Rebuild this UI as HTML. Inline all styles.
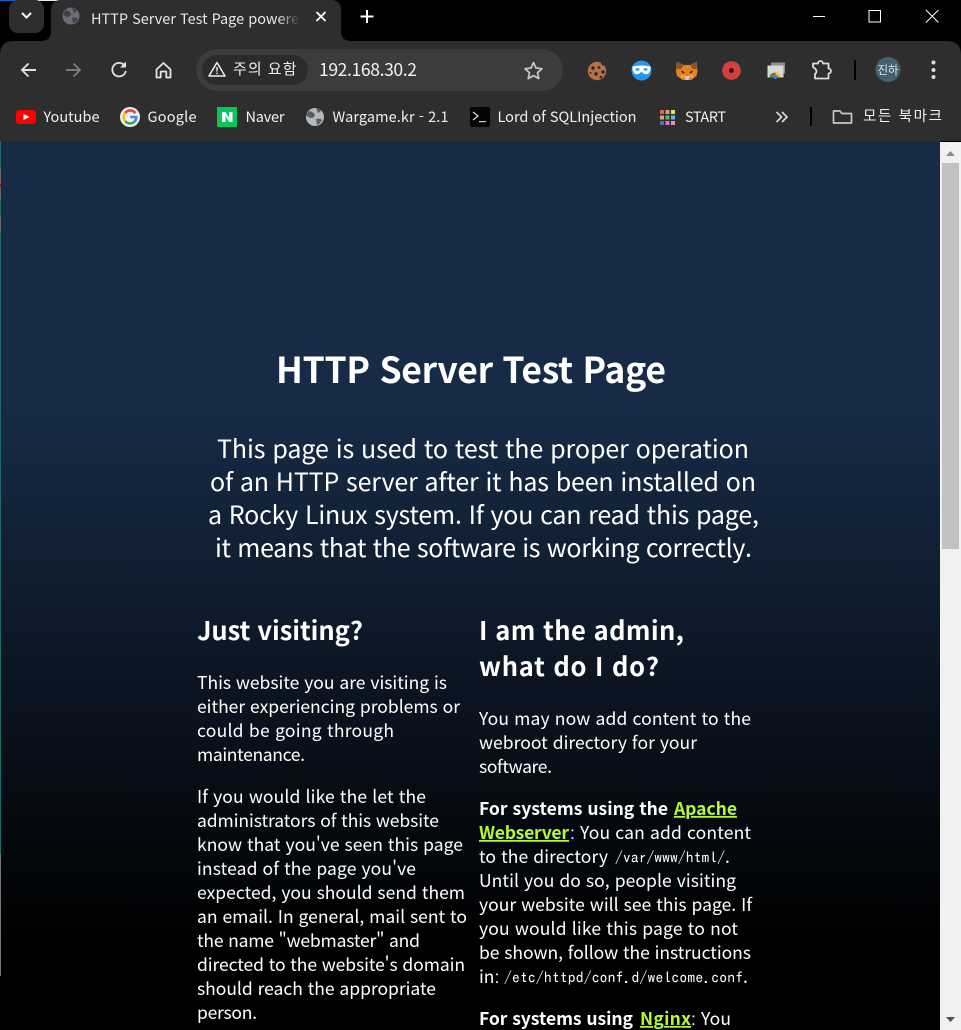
<!DOCTYPE html>
<html lang="ko"><head><meta charset="utf-8"><title>HTTP Server Test Page</title>
<style>
html,body{margin:0;padding:0;background:#000;width:961px;height:1030px;overflow:hidden}
svg{display:block;position:absolute;left:0;top:0}
text{font-family:"Noto Sans CJK KR","Liberation Sans",sans-serif;fill:#fff}
tspan.c{font-family:"Liberation Sans",sans-serif}
.ui{font-size:14.5px;fill:#f0f0f0}
.b{font-size:17.5px}
.bb{font-size:17.5px;font-weight:700}
.m{font-family:"IPAGothic","Liberation Mono",monospace;font-size:15.6px}
.l{fill:#b4f836;font-size:17.5px;font-weight:700;text-decoration:underline}
.h2{font-size:25.5px;font-weight:700}
.lead{font-size:25px}
</style></head><body>
<svg width="961" height="1030" viewBox="0 0 961 1030" xmlns="http://www.w3.org/2000/svg">
<defs>
<linearGradient id="g" x1="0" y1="141" x2="0" y2="1030" gradientUnits="userSpaceOnUse">
<stop offset="0.3" stop-color="#172b46"/><stop offset="0.9" stop-color="#000"/>
</linearGradient>
<linearGradient id="f" x1="0" x2="1"><stop offset="0" stop-color="#2e2e2e" stop-opacity="0"/><stop offset="1" stop-color="#2e2e2e"/></linearGradient>
</defs>

<!-- page -->
<rect x="0" y="141" width="941" height="889" fill="url(#g)"/>
<rect x="0" y="141" width="1" height="270" fill="#1f6a68"/>
<rect x="0" y="411" width="1" height="155" fill="#1f6a68"/>
<rect x="0" y="168" width="1" height="32" fill="#666"/>
<rect x="0" y="184" width="1" height="3" fill="#8a2020"/>
<rect x="0" y="216" width="1" height="16" fill="#666"/>
<rect x="0" y="566" width="1" height="408" fill="#1f6a68"/>
<rect x="0" y="854" width="1" height="122" fill="#777"/>

<!-- scrollbar -->
<rect x="940" y="142" width="21" height="888" fill="#f1f1f1"/>
<rect x="942" y="163" width="17" height="386" fill="#c1c1c1"/>
<path d="M946 156 L955 156 L950.5 151 Z" fill="#8c8c8c"/>
<path d="M946 1017 L955 1017 L950.5 1022 Z" fill="#505050"/>

<!-- headings -->
<text x="276" y="383" font-size="35.5" font-weight="700" textLength="390" lengthAdjust="spacing">HTTP Server Test Page</text>
<text class="lead" x="217" y="458" textLength="532" lengthAdjust="spacing">This page is used to test the proper operation</text>
<text class="lead" x="210" y="491" textLength="546" lengthAdjust="spacing">of an HTTP server after it has been installed on</text>
<text class="lead" x="208" y="524" textLength="551" lengthAdjust="spacing">a Rocky Linux system. If you can read this page,</text>
<text class="lead" x="215" y="557" textLength="537" lengthAdjust="spacing">it means that the software is working correctly.</text>

<text class="h2" x="197" y="640" textLength="166" lengthAdjust="spacing">Just visiting?</text>
<text class="h2" x="479" y="640" textLength="205" lengthAdjust="spacing">I am the admin,</text>
<text class="h2" x="479" y="676" textLength="180" lengthAdjust="spacing">what do I do?</text>

<!-- left column -->
<text class="b" x="197" y="689" textLength="250" lengthAdjust="spacing">This website you are visiting is</text>
<text class="b" x="197" y="713" textLength="263" lengthAdjust="spacing">either experiencing problems or</text>
<text class="b" x="197" y="737" textLength="197" lengthAdjust="spacing">could be going through</text>
<text class="b" x="197" y="761" textLength="108" lengthAdjust="spacing">maintenance.</text>
<text class="b" x="197" y="803" textLength="229" lengthAdjust="spacing">If you would like the let the</text>
<text class="b" x="197" y="827" textLength="242" lengthAdjust="spacing">administrators of this website</text>
<text class="b" x="197" y="851" textLength="266" lengthAdjust="spacing">know that you've seen this page</text>
<text class="b" x="197" y="875" textLength="219" lengthAdjust="spacing">instead of the page you've</text>
<text class="b" x="197" y="899" textLength="268" lengthAdjust="spacing">expected, you should send them</text>
<text class="b" x="197" y="923" textLength="270" lengthAdjust="spacing">an email. In general, mail sent to</text>
<text class="b" x="197" y="947" textLength="223" lengthAdjust="spacing">the name "webmaster" and</text>
<text class="b" x="197" y="971" textLength="268" lengthAdjust="spacing">directed to the website's domain</text>
<text class="b" x="197" y="995" textLength="239" lengthAdjust="spacing">should reach the appropriate</text>
<text class="b" x="197" y="1019" textLength="60" lengthAdjust="spacing">person.</text>

<!-- right column -->
<text class="b" x="479" y="725" textLength="272" lengthAdjust="spacing">You may now add content to the</text>
<text class="b" x="479" y="749" textLength="218" lengthAdjust="spacing">webroot directory for your</text>
<text class="b" x="479" y="773" textLength="73" lengthAdjust="spacing">software.</text>
<text class="bb" x="479" y="815" textLength="189" lengthAdjust="spacing">For systems using the</text>
<text class="l" x="674" y="815" textLength="63" lengthAdjust="spacing">Apache</text>
<text class="l" x="479" y="839" textLength="90" lengthAdjust="spacing">Webserver</text>
<text class="b" x="570" y="839" textLength="181" lengthAdjust="spacing"><tspan class="c">:</tspan> You can add content</text>
<text class="b" x="479" y="863" textLength="129" lengthAdjust="spacing">to the directory</text>
<text class="m" x="615" y="863" textLength="110" lengthAdjust="spacing">/var/www/html/</text>
<text class="b" x="725" y="863">.</text>
<text class="b" x="479" y="887" textLength="257" lengthAdjust="spacing">Until you do so, people visiting</text>
<text class="b" x="479" y="911" textLength="273" lengthAdjust="spacing">your website will see this page. If</text>
<text class="b" x="479" y="935" textLength="259" lengthAdjust="spacing">you would like this page to not</text>
<text class="b" x="479" y="959" textLength="272" lengthAdjust="spacing">be shown, follow the instructions</text>
<text class="b" x="479" y="983">in<tspan class="c">:</tspan></text>
<text class="m" x="504" y="983" textLength="239" lengthAdjust="spacing">/etc/httpd/conf.d/welcome.conf</text>
<text class="b" x="743" y="983">.</text>
<text class="bb" x="479" y="1025" textLength="154" lengthAdjust="spacing">For systems using</text>
<text class="l" x="640" y="1025" textLength="51" lengthAdjust="spacing">Nginx</text>
<text class="b" x="691" y="1025" textLength="40" lengthAdjust="spacing"><tspan class="c">:</tspan> You</text>

<!-- browser chrome -->
<rect x="0" y="0" width="961" height="41" fill="#000"/>
<rect x="0" y="0" width="30" height="1" fill="#0a66c8"/>
<rect x="30" y="0" width="120" height="1" fill="#e8e8e8"/>
<path d="M0 141 V55 Q0 41 14 41 H947 Q961 41 961 55 V141 Z" fill="#2e2e2e"/>
<rect x="9" y="0" width="35" height="33" rx="9" fill="#2e2e2e"/>
<path d="M22 13 L26.5 17.5 L31 13" fill="none" stroke="#fff" stroke-width="2"/>
<!-- tab -->
<path d="M41 41 Q51 41 51 31 V10 Q51 0 61 0 H331 Q341 0 341 10 V31 Q341 41 351 41 Z" fill="#2e2e2e"/>
<circle cx="71" cy="16" r="8.5" fill="#6a6e73"/>
<path d="M66 10 q4 1 5 4 q-1 3 -4 3 q-3 -1 -4 -3 Z M72 18 q4 -1 6 1 q-2 4 -5 4 Z M72 8 q3 0 5 3 l-3 2 Z" fill="#3f4245"/>
<text x="91" y="24" font-size="14.5" textLength="208" lengthAdjust="spacing" style="fill:#e6e6e6">HTTP Server Test Page powere</text>
<rect x="278" y="5" width="22" height="25" fill="url(#f)"/>
<path d="M316.5 12 L325.5 21 M325.5 12 L316.5 21" stroke="#fff" stroke-width="1.8"/>
<path d="M367 10 V23 M360.5 16.5 H373.5" stroke="#fff" stroke-width="2"/>
<!-- window controls -->
<rect x="813" y="16" width="12" height="1" fill="#fff"/>
<rect x="869" y="10.5" width="11.5" height="11.5" fill="none" stroke="#fff" stroke-width="1"/>
<path d="M926 10 L938.5 22.5 M938.5 10 L926 22.5" stroke="#fff" stroke-width="1"/>

<!-- nav icons -->
<path d="M36 70 H22 M28.5 63.5 L22 70 L28.5 76.5" fill="none" stroke="#e3e3e3" stroke-width="1.9"/>
<path d="M66 70 H80 M73.5 63.5 L80 70 L73.5 76.5" fill="none" stroke="#7a7a7a" stroke-width="1.9"/>
<path d="M124.5 65.5 A6.8 6.8 0 1 0 125.8 71" fill="none" stroke="#e3e3e3" stroke-width="1.8"/>
<path d="M126 61.5 V67.5 H120 Z" fill="#e3e3e3"/>
<path d="M156.5 69.5 L163.5 63 L170.5 69.5 V77.5 H166.3 V71.5 H160.7 V77.5 H156.5 Z" fill="none" stroke="#e3e3e3" stroke-width="1.8" stroke-linejoin="round"/>

<!-- omnibox -->
<rect x="196" y="49" width="367" height="42" rx="21" fill="#3c3c3c"/>
<rect x="202" y="55" width="106" height="30" rx="15" fill="#2b2b2b"/>
<path d="M217 62.5 L225 76 H209 Z" fill="none" stroke="#f0f0f0" stroke-width="1.5" stroke-linejoin="round"/>
<path d="M217 67 V71.5 M217 72.6 V74.2" stroke="#f0f0f0" stroke-width="1.4"/>
<text x="233" y="74" font-size="15" textLength="63.5" lengthAdjust="spacing" style="fill:#f0f0f0">주의 요함</text>
<text x="319" y="76" font-size="17.5" textLength="98" lengthAdjust="spacing" style="fill:#f2f2f2">192.168.30.2</text>
<path d="M533.5 62.5 L536 68 L542 68.7 L537.5 72.7 L538.8 78.6 L533.5 75.6 L528.2 78.6 L529.5 72.7 L525 68.7 L531 68 Z" fill="none" stroke="#c8c8c8" stroke-width="1.7" stroke-linejoin="round"/>

<!-- extensions -->
<circle cx="597" cy="71" r="9.2" fill="#b5714a"/>
<circle cx="604" cy="62.5" r="3.2" fill="#2e2e2e"/>
<g fill="#3a2418"><circle cx="593" cy="68" r="1.7"/><circle cx="599" cy="67.5" r="1.4"/><circle cx="603" cy="72" r="1.7"/><circle cx="596" cy="74" r="1.8"/><circle cx="601" cy="77" r="1.3"/><circle cx="590.5" cy="73" r="1"/></g>
<circle cx="641.5" cy="70.5" r="10" fill="#2196f3"/>
<path d="M632.5 66.5 Q641.5 64.5 650.5 66.5 Q651 72 647.5 74 Q644 75 641.5 71.5 Q639 75 635.5 74 Q632 72 632.5 66.5 Z" fill="#fff"/>
<ellipse cx="637.5" cy="69.5" rx="2" ry="1.2" fill="#2196f3"/><ellipse cx="645.5" cy="69.5" rx="2" ry="1.2" fill="#2196f3"/>
<path d="M676.5 61.5 L684 65 H690 L697 61.5 L697.5 72 L696.5 76 L691 80 H683 L677 76 L676 72 Z" fill="#e8801f"/>
<path d="M676.5 61.5 L684 65 L681 69 L676.5 69 Z M697 61.5 L690 65 L693 69 L697.5 69 Z" fill="#8a5426"/>
<path d="M681 70 L685 72.5 L682.5 73.5 Z M693 70 L689 72.5 L691.5 73.5 Z" fill="#40260f"/>
<path d="M684 76 H690 L688.5 80 H685.5 Z" fill="#d9c7b5"/>
<path d="M681 74 L685 76 L681 79 Z M693 74 L689 76 L693 79 Z" fill="#f6a04a"/>
<circle cx="731.5" cy="70.5" r="9.3" fill="#d43f3f"/>
<circle cx="731.5" cy="70.5" r="2.5" fill="#3a1414"/>
<rect x="771" y="62.5" width="14" height="11" fill="#8d8d8d"/>
<rect x="767.5" y="65.5" width="16" height="12" fill="#d9d9d9"/>
<path d="M769.5 77.5 A5.8 5.8 0 0 1 781 77.5 Z" fill="#d8392e"/>
<path d="M775.5 72 A5.8 5.8 0 0 1 781 77.5 H778 A2.5 2.5 0 0 0 775.5 75 Z" fill="#f5c12e"/>
<path d="M769.5 77.5 A5.8 5.8 0 0 1 771.5 73.3 L773.5 75.5 A2.5 2.5 0 0 0 773 77.5 Z" fill="#2fa44f"/>
<circle cx="775.3" cy="77" r="2" fill="#3f7fe0"/>
<path d="M813 63.5 H818 A2.5 2.5 0 0 1 823 63.5 H828.5 V68.5 A2.4 2.4 0 0 1 828.5 73.5 V78.5 H815 V74 Q818 71.5 815 68.5 L813 67 Z" fill="none" stroke="#dcdcdc" stroke-width="1.8" stroke-linejoin="round"/>
<rect x="854" y="60" width="2" height="20" fill="#000"/>
<circle cx="888" cy="69.5" r="12.5" fill="#45606f"/>
<text x="877.5" y="74" font-size="11.5" textLength="21" lengthAdjust="spacing" style="fill:#e4e8ea">진하</text>
<g fill="#dcdcdc"><circle cx="933.5" cy="62.5" r="2"/><circle cx="933.5" cy="70" r="2"/><circle cx="933.5" cy="77" r="2"/></g>

<!-- bookmarks -->
<rect x="16" y="110" width="20" height="14" rx="3.5" fill="#f00"/>
<path d="M23.5 114 L29.5 117 L23.5 120 Z" fill="#fff"/>
<text class="ui" x="43.5" y="122" textLength="56" lengthAdjust="spacing">Youtube</text>

<circle cx="130" cy="117" r="10" fill="#f1f1f1"/>
<g fill="none" stroke-width="2.6">
<path d="M135.4 113.2 A6.4 6.4 0 0 0 125.2 112.8" stroke="#ea4335"/>
<path d="M125.2 112.8 A6.4 6.4 0 0 0 125.2 121.2" stroke="#fbbc05"/>
<path d="M125.2 121.2 A6.4 6.4 0 0 0 134.7 121.4" stroke="#34a853"/>
<path d="M134.7 121.4 A6.4 6.4 0 0 0 136.2 117 H130.3" stroke="#4285f4"/>
</g>
<text class="ui" x="147.5" y="122" textLength="49" lengthAdjust="spacing">Google</text>

<rect x="217" y="107" width="20" height="20" fill="#03c75a"/>
<path d="M222 112 H225.5 L229 118 V112 H232.5 V122 H229 L225.5 116 V122 H222 Z" fill="#fff"/>
<text class="ui" x="245.5" y="122" textLength="39" lengthAdjust="spacing">Naver</text>

<circle cx="315" cy="117" r="9" fill="#b5b8bc"/>
<path d="M309 111 q5 1 6 4 q-1 3 -4 3 q-4 -1 -5 -3 Z M316 119 q4 -1 6 1 q-2 4 -5 5 Z M316 108 q3 0 5 3 l-3 2 Z" fill="#5a5d60"/>
<text class="ui" x="332.5" y="122" textLength="116" lengthAdjust="spacing">Wargame.kr - 2.1</text>

<rect x="470" y="107" width="20" height="20" rx="2" fill="#050505"/>
<path d="M473 112 L478 116 L473 120" fill="none" stroke="#cfcfcf" stroke-width="1.4"/>
<rect x="479" y="121" width="7" height="1.2" fill="#cfcfcf"/>
<text class="ui" x="497.5" y="122" textLength="139" lengthAdjust="spacing">Lord of SQLInjection</text>

<g>
<rect x="660" y="110" width="4" height="4" fill="#e0605a"/><rect x="665.5" y="110" width="4" height="4" fill="#ef9a5a"/><rect x="671" y="110" width="4" height="4" fill="#f5dc5a"/>
<rect x="660" y="115.5" width="4" height="4" fill="#e0a07a"/><rect x="665.5" y="115.5" width="4" height="4" fill="#4cc06a"/><rect x="671" y="115.5" width="4" height="4" fill="#60b8e8"/>
<rect x="660" y="121" width="4" height="4" fill="#4a72b8"/><rect x="665.5" y="121" width="4" height="4" fill="#e070d0"/><rect x="671" y="121" width="4" height="4" fill="#f08ac0"/>
</g>
<text class="ui" x="685" y="122" textLength="41" lengthAdjust="spacing">START</text>

<path d="M776.5 112 L781.5 117 L776.5 122 M782 112 L787 117 L782 122" fill="none" stroke="#d8d8d8" stroke-width="1.7"/>
<rect x="810" y="107" width="2" height="19" fill="#000"/>
<path d="M833.5 123 V111 H840 L842 113.5 H851.5 V123 Z" fill="none" stroke="#c8c8c8" stroke-width="1.7" stroke-linejoin="round"/>
<text x="863" y="121" font-size="14.5" textLength="79" lengthAdjust="spacing" style="fill:#f0f0f0">모든 북마크</text>
</svg>
</body></html>
